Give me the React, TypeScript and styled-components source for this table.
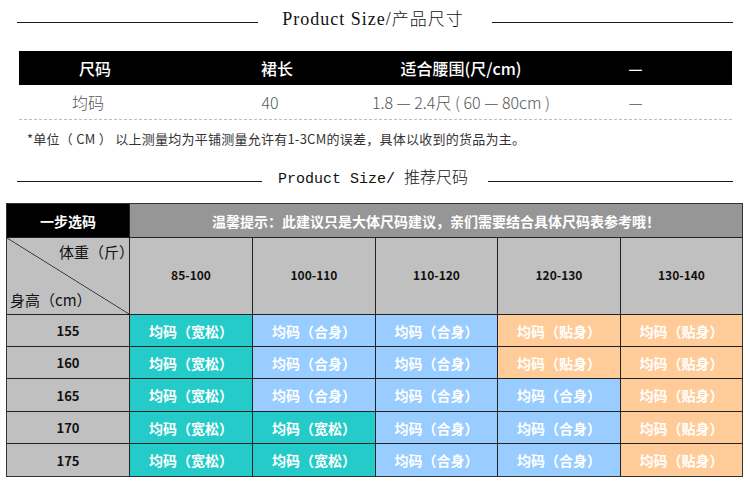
import styled, { createGlobalStyle } from "styled-components";

type Tone = "wide" | "fit" | "tight";

const weights = ["85-100", "100-110", "110-120", "120-130", "130-140"];
const rows: { height: string; fits: Tone[] }[] = [
  { height: "155", fits: ["wide", "fit", "fit", "tight", "tight"] },
  { height: "160", fits: ["wide", "fit", "fit", "tight", "tight"] },
  { height: "165", fits: ["wide", "fit", "fit", "fit", "tight"] },
  { height: "170", fits: ["wide", "wide", "fit", "fit", "tight"] },
  { height: "175", fits: ["wide", "wide", "fit", "fit", "tight"] },
];

const toneColor: Record<Tone, string> = {
  wide: "#25cbc9",
  fit: "#99ccff",
  tight: "#ffcc99",
};

const toneLabel: Record<Tone, string> = {
  wide: "均码（宽松）",
  fit: "均码（合身）",
  tight: "均码（贴身）",
};

const App = () => {
  return (
    <Page>
      <GlobalStyle />
      <TitleRow $top={0} $left={24} $right={28} $lift={10}>
        <Rule />
        <SerifTitle>
          Product Size/<span>产品尺寸</span>
        </SerifTitle>
        <Rule />
      </TitleRow>

      <SpecTable>
        <SpecHead>尺码</SpecHead>
        <SpecHead>裙长</SpecHead>
        <SpecHead>适合腰围(尺/cm)</SpecHead>
        <SpecHead>—</SpecHead>
        <SpecCell $nudge>均码</SpecCell>
        <SpecCell $nudge>40</SpecCell>
        <SpecCell>1.8 — 2.4尺 ( 60 — 80cm )</SpecCell>
        <SpecCell>—</SpecCell>
      </SpecTable>

      <Note>*单位（ CM ） 以上测量均为平铺测量允许有1-3CM的误差，具体以收到的货品为主。</Note>

      <TitleRow $top={10} $left={16} $right={20} $lift={11}>
        <Rule />
        <MonoTitle>
          Product Size/ <span>推荐尺码</span>
        </MonoTitle>
        <Rule />
      </TitleRow>

      <SizeGrid>
        <StepCell>一步选码</StepCell>
        <TipCell>温馨提示：此建议只是大体尺码建议，亲们需要结合具体尺码表参考哦！</TipCell>
        <CornerCell>
          <span className="weight">体重（斤）</span>
          <span className="height">身高（cm）</span>
        </CornerCell>
        {weights.map((w) => (
          <WeightCell key={w}>{w}</WeightCell>
        ))}
        {rows.map((r) => (
          <Row key={r.height}>
            <HeightCell>{r.height}</HeightCell>
            {r.fits.map((t, i) => (
              <FitCell key={i} $tone={t}>
                {toneLabel[t]}
              </FitCell>
            ))}
          </Row>
        ))}
      </SizeGrid>
    </Page>
  );
};

const GlobalStyle = createGlobalStyle`
  body {
    margin: 0;
    background: #fff;
  }
`;

const Page = styled.div`
  width: 750px;
  height: 497px;
  overflow: hidden;
  font-family: "Noto Sans CJK SC", "Noto Sans", sans-serif;
  color: #222;
`;

const TitleRow = styled.div<{ $top: number; $left: number; $right: number; $lift: number }>`
  display: flex;
  align-items: center;
  height: 44px;
  padding: 0 17px;
  margin-top: ${({ $top }) => $top}px;
  & > div:nth-child(2) {
    margin: 0 ${({ $right }) => $right}px ${({ $lift }) => $lift}px ${({ $left }) => $left}px;
  }
`;

const Rule = styled.div`
  flex: 1;
  height: 1px;
  background: #1a1a1a;
`;

const SerifTitle = styled.div`
  font-family: "Liberation Serif", serif;
  font-size: 18px;
  letter-spacing: 1px;
  color: #111;
  white-space: nowrap;
  span {
    font-family: "Noto Sans CJK SC", sans-serif;
    font-weight: 300;
    font-size: 17px;
    letter-spacing: 1px;
  }
`;

const MonoTitle = styled.div`
  font-family: "Liberation Mono", monospace;
  font-size: 15px;
  color: #111;
  white-space: pre;
  span {
    font-family: "Noto Sans CJK SC", sans-serif;
    font-weight: 300;
    font-size: 16px;
  }
`;

const SpecTable = styled.div`
  display: grid;
  grid-template-columns: 152px 212px 156px 1fr;
  grid-template-rows: 34px 34px;
  margin: 7px 18px 0 19px;
  border-bottom: 1px dashed #bdbdbd;
`;

const SpecHead = styled.div`
  display: flex;
  align-items: center;
  justify-content: center;
  background: #000;
  color: #fff;
  font-size: 16px;
  font-weight: 500;
  white-space: nowrap;
`;

const SpecCell = styled.div<{ $nudge?: boolean }>`
  display: flex;
  align-items: center;
  justify-content: center;
  padding-right: ${({ $nudge }) => ($nudge ? "14px" : "0")};
  color: #555;
  font-size: 16px;
  font-weight: 300;
  white-space: nowrap;
`;

const Note = styled.div`
  margin: 9px 0 0 27px;
  height: 20px;
  line-height: 20px;
  font-size: 13px;
  letter-spacing: 0.25px;
  color: #333;
`;

const SizeGrid = styled.div`
  display: grid;
  grid-template-columns: 122px 122px 122px 121px 122px 121px;
  grid-template-rows: 33px 76px 31px 31px 32px 31px 32px;
  gap: 1px;
  width: 737px;
  margin: 0 0 0 6px;
  background: #222;
  border: 1px solid #333;
  box-sizing: border-box;
`;

const Row = styled.div`
  display: contents;
`;

const Centered = styled.div`
  display: flex;
  align-items: center;
  justify-content: center;
`;

const StepCell = styled(Centered)`
  background: #000;
  color: #fff;
  font-size: 14px;
  font-weight: 700;
`;

const TipCell = styled(Centered)`
  grid-column: span 5;
  background: #969696;
  color: #fff;
  font-size: 14px;
  font-weight: 700;
`;

const CornerCell = styled.div`
  position: relative;
  background: linear-gradient(
    to top right,
    #c0c0c0 calc(50% - 0.7px),
    #222 50%,
    #c0c0c0 calc(50% + 0.7px)
  );
  font-size: 15px;
  color: #111;
  .weight {
    position: absolute;
    top: 3px;
    right: -5px;
  }
  .height {
    position: absolute;
    left: 3px;
    bottom: 4px;
  }
`;

const WeightCell = styled(Centered)`
  background: #c0c0c0;
  color: #111;
  font-size: 12px;
  font-weight: 700;
  padding-bottom: 4px;
`;

const HeightCell = styled(Centered)`
  background: #c0c0c0;
  color: #111;
  font-size: 13px;
  font-weight: 700;
`;

const FitCell = styled(Centered)<{ $tone: Tone }>`
  background: ${({ $tone }) => toneColor[$tone]};
  color: #fff;
  font-size: 14px;
  font-weight: 700;
`;

export default App;
